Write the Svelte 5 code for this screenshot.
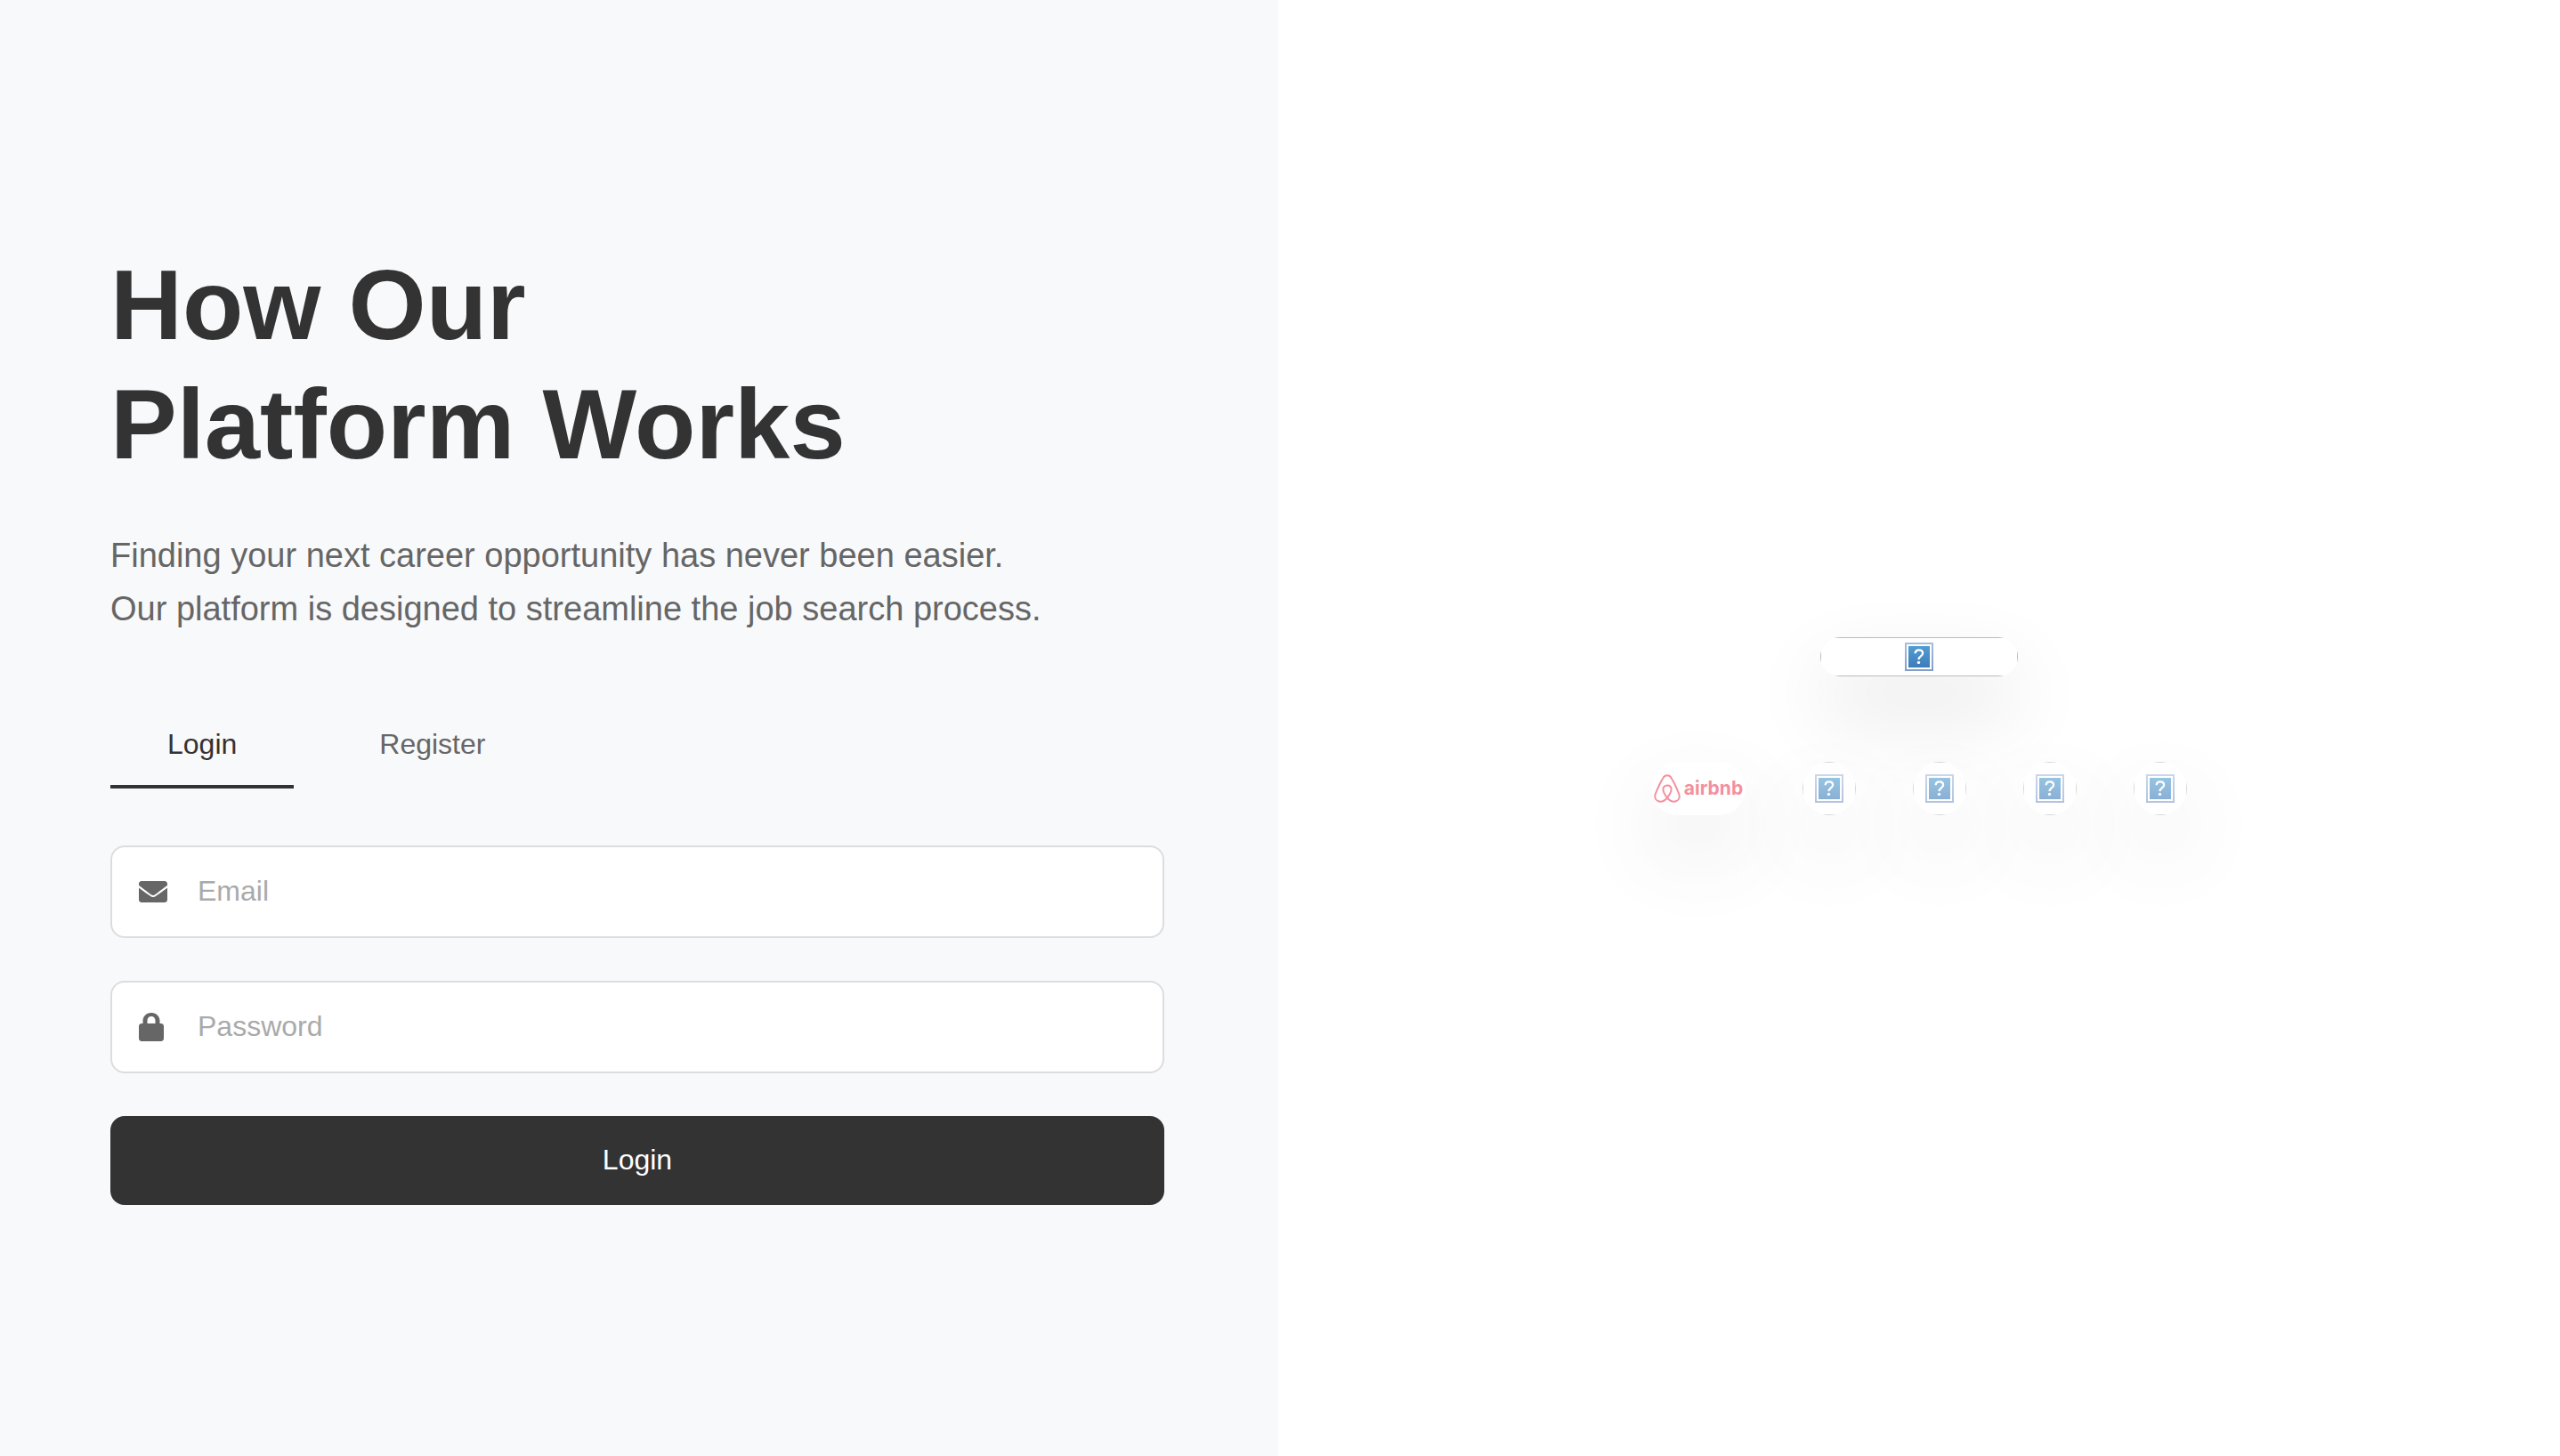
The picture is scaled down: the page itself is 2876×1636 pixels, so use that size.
<script>
  let mode = $state('login');
  let email = $state('');
  let password = $state('');
  const partners = ['Partner two', 'Partner three', 'Partner four', 'Partner five'];
</script>

{#snippet missing(id, label)}
  <svg class="missing" viewBox="0 0 32 32" role="img" aria-label={label}>
    <defs>
      <linearGradient id="{id}-edge" x1="0" y1="0" x2="0" y2="1">
        <stop offset="0" stop-color="#a8bedd" />
        <stop offset="1" stop-color="#7f9dc9" />
      </linearGradient>
      <linearGradient id="{id}-fill" x1="0" y1="0" x2="0" y2="1">
        <stop offset="0" stop-color="#519dd1" />
        <stop offset="1" stop-color="#3f7cb9" />
      </linearGradient>
    </defs>
    <rect width="32" height="32" fill="url(#{id}-edge)" />
    <rect x="2" y="2" width="28" height="28" fill="#fff" />
    <rect x="4" y="4" width="24" height="24" fill="url(#{id}-fill)" />
    <path d="M11.700 12.200C11.700 9.700 13.400 8.300 15.900 8.300s4.200 1.400 4.200 3.700c0 3.400-4.600 3.500-4.600 7" fill="none" stroke="#fff" stroke-width="2.300" />
    <circle cx="15.500" cy="22.400" r="1.700" fill="#fff" />
  </svg>
{/snippet}

<main class="page">
  <section class="intro">
    <h1>How Our<br />Platform Works</h1>
    <p class="lead">
      Finding your next career opportunity has never been easier.<br />
      Our platform is designed to streamline the job search process.
    </p>

    <div class="tabs" role="tablist">
      <button type="button" role="tab" class="tab" class:active={mode === 'login'} aria-selected={mode === 'login'} onclick={() => (mode = 'login')}>Login</button>
      <button type="button" role="tab" class="tab" class:active={mode === 'register'} aria-selected={mode === 'register'} onclick={() => (mode = 'register')}>Register</button>
    </div>

    <form class="form" onsubmit={(e) => e.preventDefault()}>
      <label class="field">
        <svg class="icon" viewBox="0 0 512 512" aria-hidden="true">
          <path d="M502.3 190.8c3.900-3.100 9.700-.2 9.700 4.700V400c0 26.500-21.500 48-48 48H48c-26.500 0-48-21.500-48-48V195.600c0-5 5.700-7.800 9.700-4.700 22.400 17.400 52.100 39.500 154.100 113.600 21.100 15.400 56.700 47.800 92.200 47.600 35.700.3 72-32.800 92.300-47.600 102-74.100 131.600-96.300 154-113.700zM256 320c23.200.4 56.600-29.200 73.400-41.400 132.700-96.300 142.800-104.700 173.400-128.700 5.800-4.500 9.200-11.500 9.200-18.900v-19c0-26.500-21.500-48-48-48H48c-26.500 0-48 21.500-48 48v19c0 7.400 3.400 14.300 9.200 18.900 30.600 23.900 40.700 32.400 173.400 128.700 16.800 12.200 50.200 41.800 73.400 41.400z" />
        </svg>
        <input type="email" bind:value={email} placeholder="Email" aria-label="Email" />
      </label>
      <label class="field">
        <svg class="icon lock" viewBox="0 0 448 512" aria-hidden="true">
          <path d="M400 192h-24v-48C376 64.500 311.500 0 232 0h-16C136.500 0 72 64.500 72 144v48H48c-26.500 0-48 21.500-48 48v224c0 26.500 21.500 48 48 48h352c26.500 0 48-21.500 48-48V240c0-26.500-21.500-48-48-48zm-104 0H152v-56c0-39.700 32.300-72 72-72s72 32.300 72 72v56z" />
        </svg>
        <input type="password" bind:value={password} placeholder="Password" aria-label="Password" />
      </label>
      <button type="submit" class="submit">{mode === 'login' ? 'Login' : 'Register'}</button>
    </form>
  </section>

  <section class="showcase">
    <div class="card hero">{@render missing('hero', 'Featured partner')}</div>
    <div class="partners">
      <div class="card airbnb">
        <svg class="belo" viewBox="0 0 30 32" aria-hidden="true">
          <path d="M15 26.500C12 22.500 10.400 19.500 10.400 17c0-2.700 1.900-4.500 4.600-4.500s4.600 1.800 4.600 4.500c0 2.500-1.600 5.500-4.600 9.500zM15 26.500c-3.500 4-7.200 5-10.300 3.700C1.200 28.700.6 25 2 21.500 3.600 17.500 9.200 5.900 11 3.200 12.900.5 17.100.5 19 3.200c1.800 2.700 7.400 14.300 9 18.300 1.400 3.500.8 7.200-2.700 8.700-3.100 1.300-6.800.3-10.300-3.700z" />
        </svg>
        <span>airbnb</span>
      </div>
      {#each partners as name, i}
        <div class="card round">{@render missing(`partner-${i}`, name)}</div>
      {/each}
    </div>
  </section>
</main>

<style>
  :global(body) {
    margin: 0;
    background: #fff;
  }
  .page {
    display: grid;
    grid-template-columns: 359fr 360fr;
    min-height: 100vh;
    font-family: Helvetica, 'Liberation Sans', Arial, sans-serif;
    color: #333;
  }
  .intro {
    box-sizing: border-box;
    display: flex;
    flex-direction: column;
    justify-content: center;
    padding: 0 128px 6px 124px;
    background: #f8f9fb;
  }
  h1 {
    margin: 0 0 50px;
    font-size: 112px;
    line-height: 134px;
    font-weight: 700;
  }
  .lead {
    margin: 0 0 80px;
    font-size: 38px;
    line-height: 60px;
    color: #666;
  }
  .tabs {
    display: flex;
    gap: 32px;
    margin-bottom: 64px;
  }
  button,
  input {
    font: inherit;
    font-size: 32px;
    line-height: 36px;
  }
  .tab {
    padding: 24px 64px 28px;
    border: 0;
    border-bottom: 4px solid transparent;
    background: none;
    color: #666;
    cursor: pointer;
  }
  .tab.active {
    border-color: #333;
    color: #333;
  }
  .form {
    display: flex;
    flex-direction: column;
    gap: 48px;
  }
  .field {
    box-sizing: border-box;
    display: grid;
    grid-template-columns: 32px 1fr;
    align-items: center;
    gap: 34px;
    height: 104px;
    padding: 0 30px;
    border: 2px solid #ddd;
    border-radius: 16px;
    background: #fff;
  }
  .icon {
    width: 32px;
    height: 32px;
    fill: #666;
  }
  .icon.lock {
    width: 28px;
  }
  input {
    min-width: 0;
    padding: 0 0 2px;
    border: 0;
    outline: 0;
    background: none;
    color: #333;
  }
  input::placeholder {
    color: #aaa;
    opacity: 1;
  }
  .submit {
    height: 100px;
    padding: 0 0 2px;
    border: 0;
    border-radius: 16px;
    background: #333;
    color: #fff;
    cursor: pointer;
  }
  .showcase {
    display: flex;
    flex-direction: column;
    align-items: center;
    justify-content: center;
    gap: 96px;
    padding-bottom: 4px;
  }
  .card {
    box-sizing: border-box;
    display: flex;
    align-items: center;
    justify-content: center;
    overflow: hidden;
    border-radius: 30px;
    background: #fff;
    box-shadow: 0 40px 90px rgba(0, 0, 0, 0.12);
  }
  .hero,
  .round {
    position: relative;
  }
  .hero::after,
  .round::after {
    content: '';
    position: absolute;
    inset: 0;
    border: 1px solid #bbb;
  }
  .hero {
    width: 222px;
    height: 44px;
    border-radius: 22px;
  }
  .partners {
    display: flex;
    gap: 64px;
  }
  .partners .card {
    height: 60px;
    opacity: 0.6;
  }
  .round {
    width: 60px;
  }
  .airbnb {
    width: 106px;
    gap: 4px;
    color: #ee455e;
    font-family: Inter, sans-serif;
    font-size: 21px;
    line-height: 28px;
    font-weight: 700;
  }
  .missing {
    width: 32px;
    height: 32px;
  }
  .belo {
    flex: none;
    width: 30px;
    height: 32px;
    fill: none;
    stroke: currentColor;
    stroke-width: 2;
  }
</style>
